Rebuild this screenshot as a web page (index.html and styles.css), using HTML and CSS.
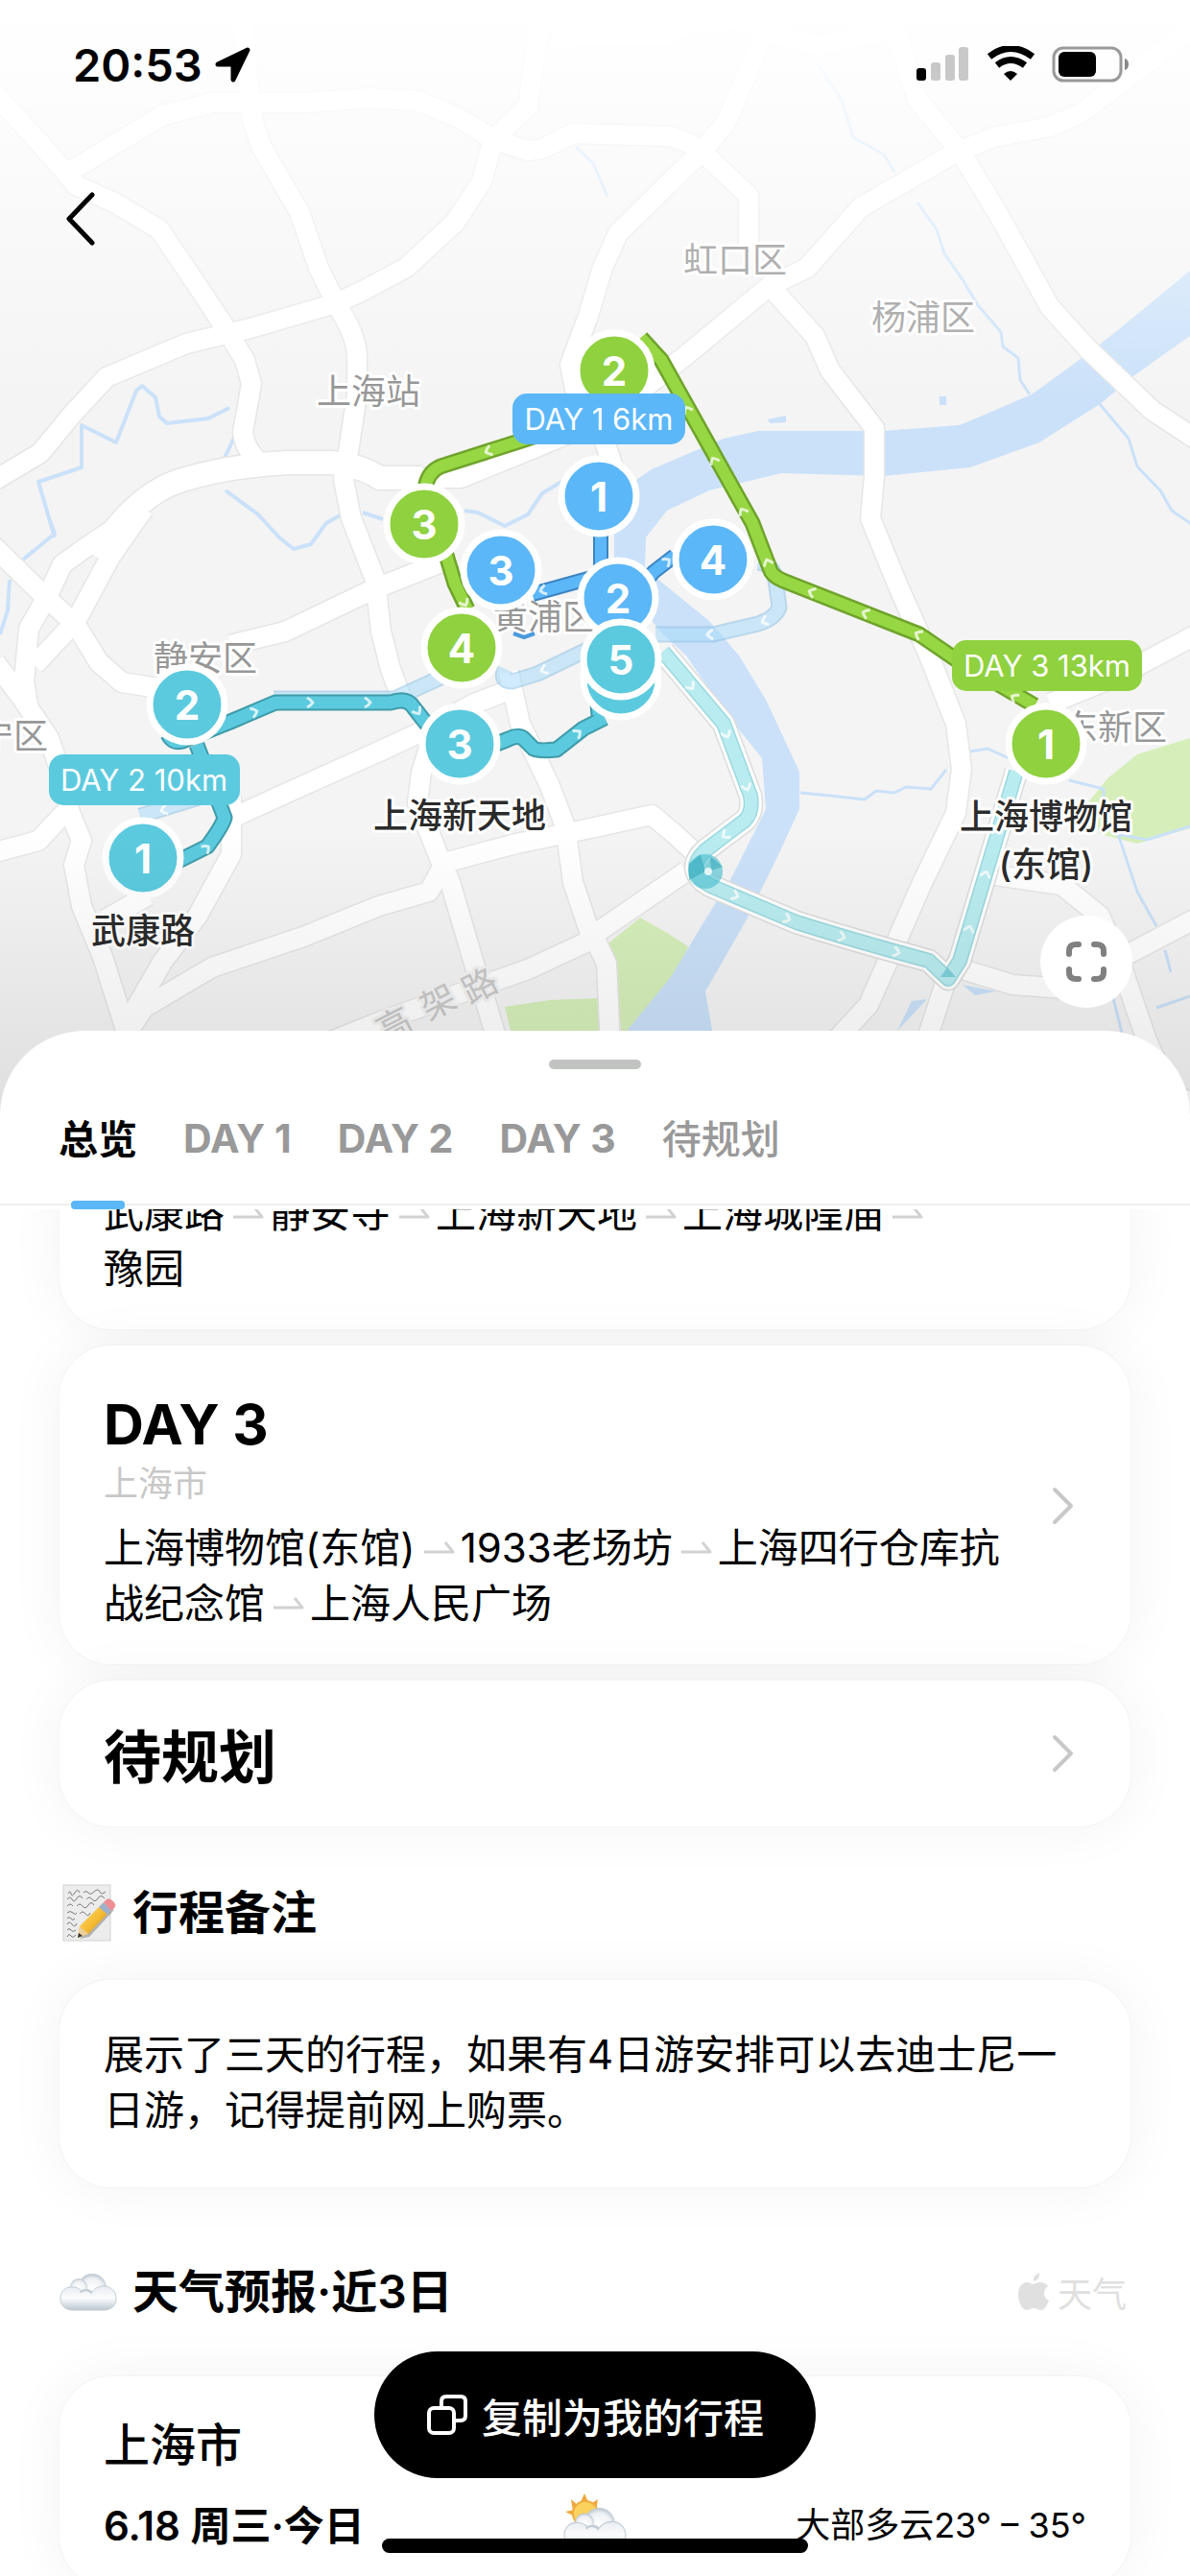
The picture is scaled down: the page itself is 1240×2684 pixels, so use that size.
FILE: index.html
```html
<!DOCTYPE html>
<html lang="zh-CN">
<head>
<meta charset="utf-8">
<meta name="viewport" content="width=device-width, initial-scale=1">
<title>上海三日行程</title>
<link rel="stylesheet" href="styles.css">
</head>
<body>
<svg class="defs" width="0" height="0" aria-hidden="true">
  <defs>
    <symbol id="chevron" viewBox="0 0 24 40"><path d="M3 3 20 20 3 37" fill="none" stroke="currentColor" stroke-width="4" stroke-linecap="round" stroke-linejoin="round"/></symbol>
    <symbol id="to" viewBox="0 0 33 16"><path d="M1 13H31L23 3" fill="none" stroke="currentColor" stroke-width="3" stroke-linejoin="round"/></symbol>
    <radialGradient id="puff" cx=".5" cy=".55" r=".55"><stop offset="0" stop-color="#fff"/><stop offset=".7" stop-color="#eef1f4"/><stop offset="1" stop-color="#b9c4ce"/></radialGradient>
    <linearGradient id="cloudFill" x1="0" y1="0" x2="0" y2="1"><stop offset="0" stop-color="#e9edf1"/><stop offset=".5" stop-color="#fbfcfd"/><stop offset="1" stop-color="#bcc7d2"/></linearGradient>
    <symbol id="cloud" viewBox="0 0 60 40">
      <circle cx="34" cy="16" r="15" fill="url(#puff)"/>
      <circle cx="20" cy="15" r="9" fill="url(#puff)"/>
      <path d="M14 39C6 39 1 34 1 27 1 19 7 14 14 15c4 0 7 2 9 4 4-2 8-2 11 1 3-4 7-6 12-6 8 0 13 6 13 13S54 39 46 39Z" fill="url(#cloudFill)" stroke="#c2ccd5" stroke-width="1"/>
      <path d="M22 20c4-3 9-2 11 1" fill="none" stroke="#c3cdd6" stroke-width="2" stroke-linecap="round"/>
    </symbol>
  </defs>
</svg>
<main class="app">
  <header class="hero">
    <svg class="map" viewBox="0 0 1240 1164" preserveAspectRatio="xMidYMin slice" role="img" aria-label="行程地图">
      <defs>
        <linearGradient id="fadeTop" x1="0" y1="0" x2="0" y2="1"><stop offset="0" stop-color="#fff"/><stop offset=".15" stop-color="#fff" stop-opacity=".9"/><stop offset="1" stop-color="#fff" stop-opacity="0"/></linearGradient>
        <linearGradient id="fadeBottom" x1="0" y1="0" x2="0" y2="1"><stop offset="0" stop-color="#000" stop-opacity="0"/><stop offset="1" stop-color="#000" stop-opacity=".09"/></linearGradient>
        <g id="roads">
          <path d="M-5 98 36 143 67 178 79 193 119 211 166 239 210 304 233 339 255 375 262 400 253 450Q255 470 273 484"/>
          <path d="M67 182 170 120 221 107 316 107 384 102 435 105 478 123 514 145 550 157 565 155 597 139 699 142 719 150 735 161 780 204V262"/>
          <path d="M253 11 257 71 263 125 273 154 312 221 332 279 350 316Q372 350 372 372V411L364 464 358 500 366 540 391 604 397 658 407 697 421 735"/>
          <path d="M514 145 502 189 474 232 423 279 376 304 350 316 261 342 194 358 111 393 75 432 42 472-5 500"/>
          <path d="M514 145 550 111 561 36 569 5M575 40 620 38H695L719 25 770 21 802 34 853 48 897 37 930 34"/>
          <path d="M794 39 758 125 735 154 695 193 644 243 628 279 612 332 605 350 594 380 600 410 625 445 640 490"/>
          <path d="M924 0 940 54 956 104 1000 157 1039 221 1094 320 1134 364 1201 428 1250 460"/>
          <path d="M1250 24 1126 118 1094 132 1035 143 992 161 897 216 841 279 802 298 715 370 670 405"/>
          <path d="M802 298 849 350 865 386 911 446V496L907 540 936 611 968 683 996 754 1002 801 996 847 960 922 932 986 905 1047 870 1085"/>
          <path d="M431 498H480L554 468 620 440"/>
          <path d="M150 530 90 570 65 588 50 620 30 655 25 710 30 740M150 530 115 580 79 647 36 693"/>
          <path d="M-8 568 40 615 79 651 103 690 127 711 165 717M-5 690 24 729 51 769 63 804 73 847 85 876 77 901 85 944 107 997 130 1070 134 1100M-5 888 40 876 67 847"/>
          <path d="M240 672 297 658 387 615 475 580M240 853 308 822 395 783 451 757 494 733 542 715M530 700 542 754 573 819 589 861 597 919 617 979"/>
          <path d="M450 770 439 805 435 836 459 897 469 919 494 1004 520 1090"/>
          <path d="M459 900 538 879 620 862 679 849 703 869 731 895M130 1080 150 1050 221 1008 316 976 395 944 447 929 463 900M241 830V890L206 954 170 1001 130 1070M154 933 110 958"/>
          <path d="M320 1095 400 1063 479 1035 550 1010 617 979M617 975 715 908M617 972 632 1004 636 1090"/>
          <path d="M988 1015 965 1085M990 1006 1055 1026 1110 1030M1031 911 1106 922 1146 954 1170 1011 1195 1084 1220 1140 1245 1150M1170 997 1250 955M1094 733 1166 704 1245 662"/>
        </g>
        <path id="tick" d="M-3-5Q1-3 3 0 1 3-3 5" fill="none" stroke="#fff" stroke-opacity=".75" stroke-width="3"/>
      </defs>
      <rect width="1240" height="1164" fill="#f4f4f4"/>
      <path fill="#d6efba" d="M667 956 695 972 717 986 705 1018 679 1043 663 1065 648 1080 642 1022 634 983ZM526 1049 573 1042 625 1040 632 1090H536ZM695 1090 715 1052 737 1056 745 1090ZM1240 769 1185 786 1154 811 1134 836 1146 869 1185 879 1240 863Z"/>
      <path fill="#cae1f9" d="M1240 282 1166 343 1130 371 1075 411 1000 443 920 449H790L754 457 679 489 663 500 640 540V600L691 661 715 683 754 740 794 790 798 843 762 915 735 958 699 1018 640 1090H745L735 1033 778 958 810 893 833 843V804L798 729 770 683 739 647 691 608 672 590 673 560 695 532 739 511 814 493 920 496 1011 487 1083 461 1146 421 1185 389 1240 350ZM979 413h7v9h-7ZM800 437l19-4v7l-17 1ZM950 1043 966 1041 952 1056 935 1074ZM1003 1026 1038 1033 1016 1037Z"/>
      <g fill="none" stroke="#cae1f9" stroke-width="4" stroke-linejoin="round">
        <path d="M57 560 40 502 85 487V443L121 461 142 407 148 402 162 414 166 434 174 441 217 436 239 425M51 540 57 556 24 583M10 604 8 636 0 661M245 454 233 479M235 511 269 536 291 560 306 572 324 567 340 545 356 536M378 534 399 541M484 532 498 534 526 548 550 536 565 514 585 502"/>
        <path stroke-width="3" d="M956 211 976 239 984 264 1004 293 1019 318 1043 346 1045 361 1061 373 1063 396 1073 411M853 68 877 104 889 143 921 161 932 179M600 153 618 170 633 205M1146 421 1176 457 1185 486 1209 511 1221 532 1240 545M834 826 865 829 901 833 913 824 932 826 944 820 970 822 986 802M1011 783 1029 780 1051 790M1114 813 1150 822V851L1166 872 1185 929 1205 965M1160 868 1195 875 1240 861M1214 990 1220 1013M1160 1040 1170 1080M1205 1050 1240 1038"/>
      </g>
      <g fill="none" stroke-linejoin="round">
        <use href="#roads" stroke="#e6e6e6" stroke-width="23"/>
        <path d="M100 580Q140 515 190 500T300 482H345Q380 486 395 498H440" stroke="#e6e6e6" stroke-width="27"/>
        <use href="#roads" stroke="#fff" stroke-width="20"/>
        <path d="M100 580Q140 515 190 500T300 482H345Q380 486 395 498H440" stroke="#fff" stroke-width="24"/>
      </g>
      <rect width="1240" height="420" fill="url(#fadeTop)"/>
      <g class="place place-area">
        <text class="far" x="766" y="284">虹口区</text><text class="far" x="962" y="344">杨浦区</text>
        <text x="384" y="421">上海站</text><text x="568" y="656">黄浦区</text><text x="214" y="699">静安区</text>
        <text x="-4" y="780">长宁区</text><text x="1144" y="771">浦东新区</text>
      </g>
      <g class="place place-road">
        <text transform="translate(411 1069) rotate(-27)" y="12">高</text><text transform="translate(457 1045) rotate(-27)" y="12">架</text><text transform="translate(500 1028) rotate(-27)" y="12">路</text>
      </g>
      <g fill="none" stroke-linejoin="round">
        <path d="M691 679 754 754 782 829Q785 846 776 855L735 886Q720 900 728 912 732 920 745 925L830 961Q890 980 968 1001L988 1020 1000 1001 1059 804" stroke="#dcdcdc" stroke-width="25"/>
        <path d="M691 679 754 754 782 829Q785 846 776 855L735 886Q720 900 728 912 732 920 745 925L830 961Q890 980 968 1001L988 1020 1000 1001 1059 804" stroke="#fff" stroke-width="22"/>
        <path d="M691 679 754 754 782 829Q785 846 776 855L735 886Q720 900 728 912 732 920 745 925L830 961Q890 980 968 1001L988 1020 1000 1001 1059 804" stroke="#9bd9df" stroke-width="16"/>
        <path d="M691 679 754 754 782 829Q785 846 776 855L735 886Q720 900 728 912 732 920 745 925L830 961Q890 980 968 1001L988 1020 1000 1001 1059 804" stroke="#b9ecf0" stroke-width="13"/>
        <g opacity=".55">
          <path d="M285 728H411L459 706M526 697Q520 710 534 710L560 702 620 673M146 850 237 822M683 661H743L790 650Q808 644 812 633L808 604Q806 588 790 586" stroke="#8cc0e4" stroke-width="17"/>
          <path d="M285 728H411L459 706M526 697Q520 710 534 710L560 702 620 673M146 850 237 822M683 661H743L790 650Q808 644 812 633L808 604Q806 588 790 586" stroke="#a8dcfa" stroke-width="13"/>
        </g>
        <g stroke="#3c84c2" stroke-width="16"><path id="blueRoute" d="M626 550V610M555 619 620 601M672 607 681 596 703 579"/></g>
        <use href="#blueRoute" stroke="#5bb7f8" stroke-width="12"/>
        <path d="M535 660 546 664 557 660" stroke="#4a9bdc" stroke-width="4"/>
        <g stroke="#3f9ba9" stroke-width="17"><path id="tealRoute" d="M180 900 216 882Q232 860 234 852L205 776M175 765Q180 775 190 772L240 752 287 732H407Q424 726 431 737L445 755M515 776 530 770Q542 764 548 772L556 780Q562 783 580 781L608 759 630 748M622 722 624 745"/></g>
        <use href="#tealRoute" stroke="#5ccade" stroke-width="13"/>
        <g stroke="#6fa32c" stroke-width="17"><path id="greenRoute" d="M443 510Q445 492 459 486L550 457 600 440M668 352 689 375 784 545 802 592Q804 600 816 605L958 661 996 687 1078 735M464 575 474 608 487 635"/></g>
        <use href="#greenRoute" stroke="#97d743" stroke-width="12"/>
      </g>
      <circle cx="735" cy="908" r="18" fill="#4fc3d3" fill-opacity=".65"/>
      <path d="M735 908 718 917V900L730 890ZM740 892 741 907 753 903Z" fill="#35a9bb" fill-opacity=".55"/><circle cx="738" cy="908" r="4" fill="#e6f8fa"/>
      <path d="M980 1018 987 1008 996 1018Z" fill="#65c5d2" fill-opacity=".7"/>
      <g>
        <use href="#tick" transform="translate(509 470) rotate(160)"/><use href="#tick" transform="translate(716 427) rotate(-119)"/><use href="#tick" transform="translate(744 480) rotate(-119)"/><use href="#tick" transform="translate(774 533) rotate(-119)"/><use href="#tick" transform="translate(800 586) rotate(-112)"/>
        <use href="#tick" transform="translate(846 617) rotate(202)"/><use href="#tick" transform="translate(902 639) rotate(202)"/><use href="#tick" transform="translate(957 661) rotate(207)"/><use href="#tick" transform="translate(1057 727) rotate(213)"/><use href="#tick" transform="translate(484 628) rotate(62)"/>
        <use href="#tick" transform="translate(265 742) rotate(-20)"/><use href="#tick" transform="translate(323 732)"/><use href="#tick" transform="translate(383 732)"/><use href="#tick" transform="translate(435 741) rotate(56)"/><use href="#tick" transform="translate(602 764) rotate(-37)"/><use href="#tick" transform="translate(215 884) rotate(-40)"/>
        <use href="#tick" transform="translate(566 615) rotate(165)"/><use href="#tick" transform="translate(695 585) rotate(-38)"/><use href="#tick" transform="translate(567 698) rotate(158)"/><use href="#tick" transform="translate(797 647) rotate(160)"/><use href="#tick" transform="translate(740 661) rotate(178)"/><use href="#tick" transform="translate(171 844) rotate(164)"/>
        <use href="#tick" transform="translate(720 715) rotate(50)"/><use href="#tick" transform="translate(757 765) rotate(68)"/><use href="#tick" transform="translate(778 820) rotate(72)"/><use href="#tick" transform="translate(756 870) rotate(142)"/><use href="#tick" transform="translate(766 933) rotate(23)"/><use href="#tick" transform="translate(820 957) rotate(23)"/><use href="#tick" transform="translate(877 976) rotate(16)"/><use href="#tick" transform="translate(934 992) rotate(15)"/><use href="#tick" transform="translate(1010 968) rotate(-73)"/><use href="#tick" transform="translate(1027 911) rotate(-73)"/>
      </g>
      <g class="pin green"><circle cx="640" cy="386" r="39"/><text x="640" y="402">2</text></g>
      <g class="pin blue"><circle cx="624" cy="517" r="39"/><text x="624" y="533">1</text></g>
      <g class="pin green"><circle cx="442" cy="546" r="39"/><text x="442" y="562">3</text></g>
      <g class="pin blue"><circle cx="522" cy="594" r="39"/><text x="522" y="610">3</text></g>
      <g class="pin blue"><circle cx="743" cy="583" r="39"/><text x="743" y="599">4</text></g>
      <g class="pin blue"><circle cx="644" cy="623" r="39"/><text x="644" y="639">2</text></g>
      <g class="pin teal"><circle cx="647" cy="708" r="39"/></g>
      <g class="pin teal"><circle cx="647" cy="687" r="39"/><text x="647" y="703">5</text></g>
      <g class="pin green"><circle cx="481" cy="675" r="39"/><text x="481" y="691">4</text></g>
      <g class="pin teal"><circle cx="195" cy="734" r="39"/><text x="195" y="750">2</text></g>
      <g class="pin teal"><circle cx="479" cy="775" r="39"/><text x="479" y="791">3</text></g>
      <g class="pin teal"><circle cx="149" cy="894" r="39"/><text x="149" y="910">1</text></g>
      <g class="pin green"><circle cx="1090" cy="775" r="39"/><text x="1090" y="791">1</text></g>
      <g class="tag blue"><rect x="534" y="410" width="180" height="53" rx="15"/><text x="624" y="448">DAY 1 6km</text></g>
      <g class="tag teal"><rect x="51" y="786" width="199" height="53" rx="15"/><text x="150" y="824">DAY 2 10km</text></g>
      <g class="tag green"><rect x="992" y="667" width="198" height="53" rx="15"/><text x="1091" y="705">DAY 3 13km</text></g>
      <g class="place place-stop">
        <text x="479" y="863">上海新天地</text><text x="149" y="983">武康路</text><text x="1090" y="864">上海博物馆</text><text x="1090" y="914">(东馆)</text>
      </g>
      <rect y="864" width="1240" height="300" fill="url(#fadeBottom)"/>
    </svg>

    <div class="status">
      <div class="clock"><time>20:53</time>
        <svg width="38" height="38" viewBox="0 0 38 38" aria-hidden="true"><path d="M35 3 20 34V18H4Z" stroke="#000" stroke-width="5" stroke-linejoin="round"/></svg>
      </div>
      <svg class="indicators" width="224" height="40" viewBox="0 0 224 40" aria-hidden="true">
        <rect x="1" y="23" width="10" height="13" rx="3"/><g fill="#c8c8c8"><rect x="16" y="17" width="10" height="19" rx="3"/><rect x="31" y="9" width="10" height="27" rx="3"/><rect x="45" y="1" width="10" height="35" rx="3"/></g>
        <g fill="none" stroke="#000" stroke-width="7"><path d="M77 11Q99-6 122 11"/><path d="M85 20Q99 9 114 20"/></g><path d="M99 36 92 29Q99 23 106 29Z"/>
        <rect x="144" y="2" width="70" height="34" rx="10" fill="none" stroke="#999" stroke-width="3"/><rect x="149" y="6" width="39" height="26" rx="6"/><path d="M218 13Q222 14 222 19 222 24 218 25Z" fill="#888"/>
      </svg>
    </div>
    <button class="back" type="button" aria-label="返回"><svg width="32" height="56" viewBox="0 0 32 56" aria-hidden="true"><path d="M28 3 4 28 28 53" fill="none" stroke="#000" stroke-width="5" stroke-linecap="round" stroke-linejoin="round"/></svg></button>
    <button class="expand" type="button" aria-label="全屏地图"><svg width="44" height="44" viewBox="0 0 44 44" aria-hidden="true"><path d="M4 14V11Q4 4 11 4H14M30 4H33Q40 4 40 11V14M40 30V33Q40 40 33 40H30M14 40H11Q4 40 4 33V30" fill="none" stroke="#808080" stroke-width="6" stroke-linecap="round"/></svg></button>
  </header>

  <section class="sheet">
    <div class="handle"></div>
    <nav class="tabs" role="tablist">
      <button class="tab active" type="button" role="tab" aria-selected="true">总览</button>
      <button class="tab" type="button" role="tab">DAY 1</button>
      <button class="tab" type="button" role="tab">DAY 2</button>
      <button class="tab" type="button" role="tab">DAY 3</button>
      <button class="tab tab-pending" type="button" role="tab">待规划</button>
    </nav>
    <div class="content">
      <article class="card scrolled">
        <p class="route">武康路<svg class="to"><use href="#to"/></svg>静安寺<svg class="to"><use href="#to"/></svg>上海新天地<svg class="to"><use href="#to"/></svg>上海城隍庙<svg class="to"><use href="#to"/></svg><span class="stop">豫园</span></p>
      </article>
      <article class="card">
        <div class="day">
          <h2>DAY 3</h2>
          <p class="city">上海市</p>
          <p class="route">上海博物馆(东馆)<svg class="to"><use href="#to"/></svg>1933老场坊<svg class="to"><use href="#to"/></svg>上海四行仓库抗战纪念馆<svg class="to"><use href="#to"/></svg>上海人民广场</p>
        </div>
        <svg class="chevron"><use href="#chevron"/></svg>
      </article>
      <article class="card pending">
        <h2>待规划</h2>
        <svg class="chevron"><use href="#chevron"/></svg>
      </article>

      <div class="heading">
        <svg width="60" height="62" viewBox="0 0 60 62" aria-hidden="true">
          <defs><linearGradient id="pencil" x1="0" y1="0" x2="1" y2="1"><stop offset="0" stop-color="#ffe07a"/><stop offset=".5" stop-color="#f6bd35"/><stop offset="1" stop-color="#b98010"/></linearGradient></defs>
          <rect x="4" y="2" width="49" height="58" fill="#ececec" stroke="#d2d2d2"/>
          <path d="M9 11q2-4 3 0t4-1 5 0M25 10q3-3 5 0t6-1 6 0 6 0M8 17q3-4 5 0t5-1 6 0M28 17q3-4 6 0t6-1 7 0M8 24q3-4 6 0M18 24q3-4 6 0t6-1 6 0M8 31q3-3 6 0t4 0M21 32q3-4 6 0t5-1M8 37q2-3 4 0t4 0M8 43q2-4 5 0t5-1M8 49q2-3 4 0t5 0M8 56q2-4 4-1t5-1" fill="none" stroke="#777" stroke-width="1"/>
          <path d="M21 58 31 56 57 28 50 23Z" opacity=".25"/>
          <path d="M19 57 21 45 45 21 53 29 30 53Z" fill="url(#pencil)"/><path d="M19 57 21 45 30 53Z" fill="#edcf9b"/><path d="M19 57 20 52 24 55Z" fill="#333"/>
          <path d="M41 25 46 20 54 28 50 33Z" fill="#9eb2cc"/><path d="M46 20 49 17Q52 15 56 19 60 23 57 26L54 29Z" fill="#ee8f93"/>
        </svg>
        <h3>行程备注</h3>
      </div>
      <article class="card note"><p class="route">展示了三天的行程，如果有4日游安排可以去迪士尼一日游，记得提前网上购票。</p></article>

      <div class="heading weather-heading">
        <svg width="60" height="40"><use href="#cloud"/></svg>
        <h3>天气预报·近3日</h3>
        <a class="source" href="#weather"><svg width="34" height="40" viewBox="0 0 34 40" aria-hidden="true"><path d="M23 0Q24 7 17 9 16 3 23 0ZM16 12C19 12 20 10 24 10 27 10 30 11 32 14 26 18 27 26 33 29 31 34 28 39 25 39 22 39 20 37 17 37S12 39 10 39C5 39 1 30 1 23 1 15 5 10 10 10 13 10 15 12 16 12Z" fill="currentColor"/></svg>天气</a>
      </div>
      <article class="card weather" id="weather">
        <h3 class="place-name">上海市</h3>
        <div class="forecast">
          <strong>6.18 周三·今日</strong>
          <svg width="68" height="60" viewBox="0 0 68 60" aria-hidden="true">
            <path d="M23 0 27 9H19ZM9 6 17 13 11 18ZM37 6 35 18 28 12ZM3 19 13 17V24Z" fill="#f0a63a"/><circle cx="24" cy="21" r="13" fill="#fbd25e" stroke="#efae40" stroke-width="2"/>
            <svg x="1" y="14" width="66" height="44"><use href="#cloud"/></svg>
          </svg>
          <span>大部多云23° – 35°</span>
        </div>
      </article>
    </div>
  </section>
  <button class="copy" type="button"><svg width="44" height="44" viewBox="0 0 44 44" aria-hidden="true"><g fill="none" stroke="#fff" stroke-width="4" stroke-linejoin="round"><rect x="3" y="15" width="26" height="26" rx="5"/><path d="M16 14V8Q16 3 21 3H36Q41 3 41 8V23Q41 28 36 28H30"/></g></svg>复制为我的行程</button>
  <div class="home-bar"></div>
</main>
</body>
</html>
```
FILE: styles.css
```css
* { box-sizing: border-box; }
body, h2, h3, p { margin: 0; }
body { background: #fff; color: #000; font-family: Inter, "Noto Sans CJK SC", sans-serif; }
button { border: 0; padding: 0; background: none; font: inherit; color: inherit; cursor: pointer; }
svg { display: block; flex: none; }
.defs { position: absolute; }

.app { position: relative; display: flex; flex-direction: column; height: 100vh; overflow: hidden; }

/* map */
.hero { position: relative; flex: none; height: 40vh; display: flex; flex-direction: column; align-items: flex-start; }
.map { position: absolute; top: 0; left: 0; width: 100%; height: calc(100% + 90px); z-index: -1; }
.place text { text-anchor: middle; paint-order: stroke; stroke: #fff; stroke-width: 6px; stroke-linejoin: round; }
.place-area { font-size: 36px; fill: #979797; }
.place-area .far { fill: #b0b0b0; }
.place-road { font-size: 36px; fill: #c9c9c9; }
.place-road text { stroke: #f4f4f4; }
.place-stop { font-size: 36px; font-weight: 500; fill: #2b2b2b; }
.pin text { fill: #fff; font-size: 42px; font-weight: 700; text-anchor: middle; }
.pin circle { stroke: #fff; stroke-width: 7px; }
.tag text { fill: #fff; font-size: 31px; text-anchor: middle; }
.blue { fill: #5bb7f8; }
.green { fill: #8fd13f; }
.teal { fill: #5ccade; }

.status { align-self: stretch; display: flex; justify-content: space-between; align-items: center; padding: 40px 62px 0 76px; height: 96px; }
.clock { display: flex; align-items: center; gap: 12px; font-size: 47px; font-weight: 600; line-height: 56px; }
.back { margin: 104px 0 0 68px; }
.expand { display: grid; place-items: center; width: 96px; height: 96px; margin: auto 60px 24px auto; border-radius: 50%; background: #fff; }

/* sheet */
.sheet { flex: 1; min-height: 0; display: flex; flex-direction: column; background: #fff; border-radius: 88px 88px 0 0; }
.handle { flex: none; width: 96px; height: 10px; margin: 30px auto 0; border-radius: 5px; background: #c1c3c1; }
.tabs { flex: none; display: flex; gap: 48px; height: 142px; margin-bottom: 4px; padding: 0 61px; border-bottom: 2px solid #efefef; }
.tab { position: relative; padding-top: 4px; font-size: 41px; font-weight: 700; color: #999; white-space: nowrap; }
.tab.active { padding-top: 0; color: #000; }
.tab-pending { padding-top: 0; font-weight: 500; }
.tab.active::after { content: ""; position: absolute; left: 50%; bottom: -6px; width: 56px; height: 9px; margin-left: -28px; border-radius: 4px; background: #5bb7f8; }
.content { flex: 1; min-height: 0; overflow: hidden; padding: 0 62px; }

.card { display: flex; align-items: center; gap: 50px; margin-bottom: 17px; padding: 36px 58px 34px 46px; border-radius: 54px; background: #fff; box-shadow: 0 0 3px rgba(0, 0, 0, .05), 0 0 60px rgba(0, 0, 0, .05); }
.card h2 { font-size: 58px; font-weight: 700; line-height: 72px; }
.card.scrolled { margin-top: -61px; padding-right: 130px; }
.day { flex: 1; padding-top: 10px; }
.city { font-size: 36px; line-height: 52px; color: #c8c8c8; }
.route { font-size: 42px; line-height: 58px; }
.day .route { margin-top: 12px; }
.stop { white-space: nowrap; }
.to { display: inline-block; width: 33px; height: 16px; margin: 0 6px 0 8px; color: #d2d2d2; vertical-align: 8px; }
.chevron { width: 24px; height: 40px; color: #c8c8c8; }
.card.pending { justify-content: space-between; padding-top: 36px; padding-bottom: 36px; margin-bottom: 56px; }
.card.pending h2 { padding-top: 8px; font-size: 60px; font-weight: 600; }

.heading { display: flex; align-items: center; gap: 16px; margin-bottom: 36px; height: 68px; }
.heading h3 { font-size: 48px; font-weight: 600; line-height: 68px; }
.card.note { padding: 49px 46px 51px; margin-bottom: 75px; }
.heading.weather-heading { margin-bottom: 54px; }
.source { display: flex; align-items: center; gap: 8px; margin-left: auto; padding-right: 4px; font-size: 36px; color: #e0e0e0; text-decoration: none; }
.card.weather { display: block; padding: 40px 46px; }
.place-name { font-size: 48px; font-weight: 500; line-height: 64px; }
.forecast { display: grid; grid-template-columns: 1fr auto 1fr; align-items: center; margin-top: 18px; height: 58px; font-size: 36px; }
.forecast strong { font-size: 42px; font-weight: 600; }
.forecast span { text-align: right; white-space: nowrap; }

.copy { position: absolute; left: 50%; bottom: 102px; transform: translateX(-50%); display: flex; align-items: center; justify-content: center; gap: 14px; width: 460px; height: 132px; border-radius: 66px; background: #000; color: #fff; font-size: 42px; font-weight: 500; white-space: nowrap; }
.home-bar { position: absolute; left: 50%; bottom: 24px; width: 444px; height: 15px; margin-left: -222px; border-radius: 8px; background: #000; }
```
